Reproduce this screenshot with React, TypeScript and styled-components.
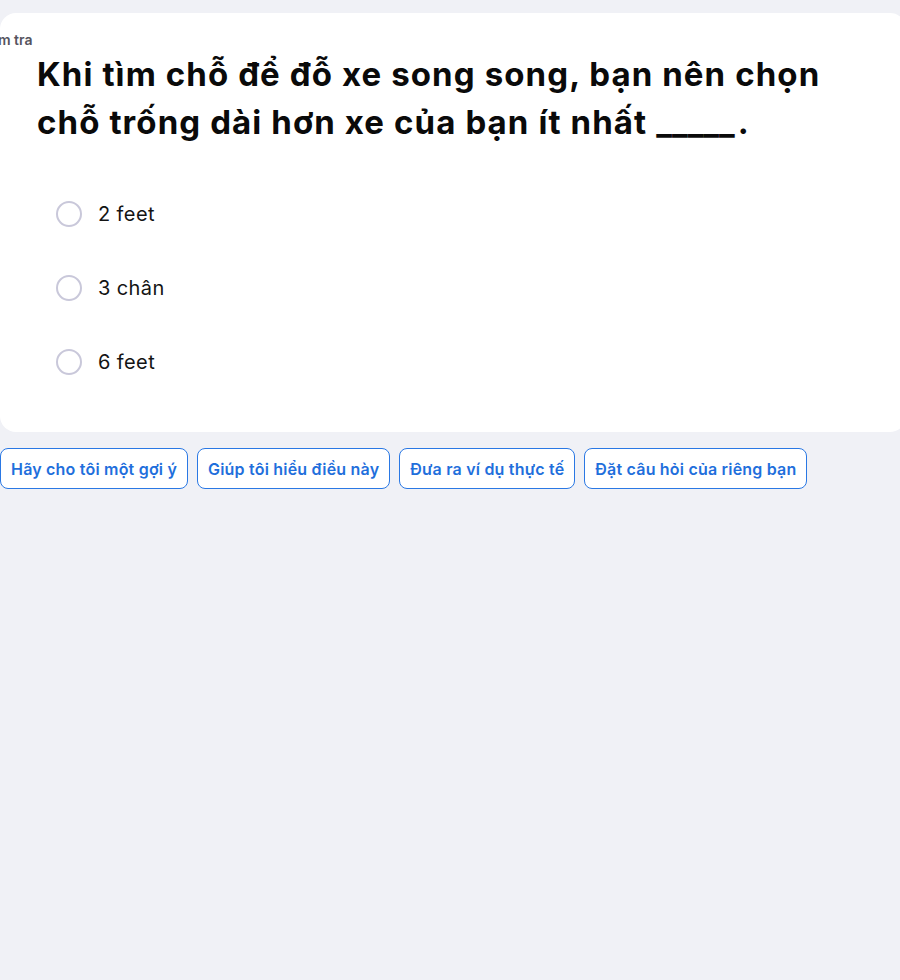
import * as React from 'react';
import styled, { createGlobalStyle } from 'styled-components';

const GlobalStyle = createGlobalStyle`
  html, body {
    margin: 0;
    padding: 0;
    background: #f0f1f6;
    overflow: hidden;
  }
  body {
    font-family: 'Inter', 'Noto Sans', sans-serif;
  }
`;

const Page = styled.div`
  padding-top: 13px;
  min-height: 967px;
`;

const Card = styled.section`
  width: 906px;
  box-sizing: border-box;
  padding: 17px 0 33px 37px;

  background: #ffffff;
  border-radius: 16px;
`;

const Label = styled.div`
  margin-left: -61px;
  height: 20px;

  font-size: 14px;
  line-height: 20px;
  font-weight: 600;
  color: #55545e;
`;

const Question = styled.h1`
  margin: 0;
  max-width: 840px;

  font-size: 33px;
  line-height: 48px;
  font-weight: 700;
  letter-spacing: 1.1px;
  color: #0a0a0a;
`;

const Blank = styled.span`
  letter-spacing: 0;
  margin-right: 3px;
`;

const Options = styled.div`
  margin-top: 31px;
  padding-left: 19px;
  display: flex;
  flex-direction: column;
`;

const Option = styled.label`
  height: 74px;
  display: flex;
  align-items: center;
  gap: 16px;
  cursor: pointer;
`;

const Radio = styled.span`
  width: 26px;
  height: 26px;
  box-sizing: border-box;
  flex-shrink: 0;

  border: 2px solid #c9c8da;
  border-radius: 50%;
`;

const OptionText = styled.span`
  font-size: 20px;
  letter-spacing: 0.4px;
  color: #141414;
`;

const Suggestions = styled.div`
  margin-top: 16px;
  display: flex;
  gap: 9px;
`;

const Chip = styled.button`
  height: 41px;
  padding: 0 10px;

  background: #ffffff;
  border: 1px solid #2a78e4;
  border-radius: 8px;

  font-family: 'Inter', 'Noto Sans', sans-serif;
  font-size: 16px;
  font-weight: 600;
  letter-spacing: 0.2px;
  color: #1f6fdc;
  white-space: nowrap;
  cursor: pointer;
`;

const answers = ['2 feet', '3 chân', '6 feet'];
const prompts = [
  'Hãy cho tôi một gợi ý',
  'Giúp tôi hiểu điều này',
  'Đưa ra ví dụ thực tế',
  'Đặt câu hỏi của riêng bạn',
];

const App: React.FC = () => {
  return (
    <Page>
      <GlobalStyle />
      <Card>
        <Label>Kiểm tra</Label>
        <Question>
          Khi tìm chỗ để đỗ xe song song, bạn nên chọn chỗ trống dài hơn xe của bạn ít nhất{' '}
          <Blank>_____</Blank>.
        </Question>
        <Options>
          {answers.map((a) => (
            <Option key={a}>
              <Radio />
              <OptionText>{a}</OptionText>
            </Option>
          ))}
        </Options>
      </Card>
      <Suggestions>
        {prompts.map((p) => (
          <Chip key={p}>{p}</Chip>
        ))}
      </Suggestions>
    </Page>
  );
};

export default App;
